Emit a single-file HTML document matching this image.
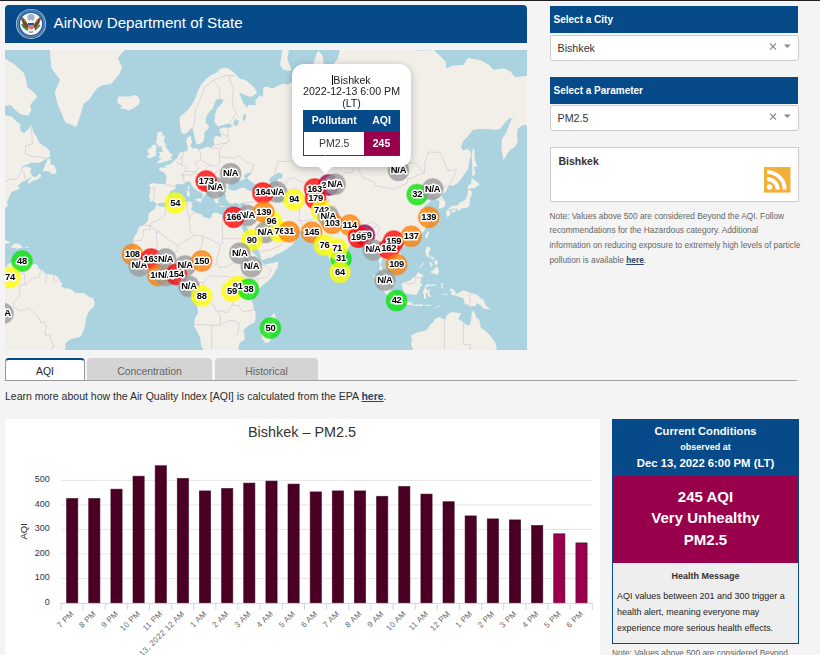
<!DOCTYPE html>
<html><head><meta charset="utf-8">
<style>
*{box-sizing:border-box;margin:0;padding:0}
html,body{width:820px;height:655px;overflow:hidden;background:#f4f4f4;font-family:"Liberation Sans",sans-serif;color:#333}
.abs{position:absolute}
#topline{left:0;top:0;width:820px;height:1px;background:#222}
#hdr{left:5px;top:5px;width:522px;height:38px;background:#064a8a;border-radius:4px 4px 0 0}
#hdr .t{position:absolute;left:48.5px;top:9px;color:#fff;font-size:15.2px;white-space:nowrap}
#map{left:5px;top:50px;width:522px;height:300px;background:#aad3df;overflow:hidden}
.rh{left:550px;width:248px;height:26.5px;background:#064a8a;color:#fff;font-weight:bold;font-size:10px;padding:8px 0 0 3.5px;white-space:nowrap}
.sel{left:550px;width:249px;height:26px;background:#fff;border:1px solid #ccc;border-radius:3px;font-size:10.7px;padding:5.8px 0 0 6.5px;color:#333}
.sel .x{position:absolute;right:22px;top:4px;font-size:14px;color:#888}
.sel .dd{position:absolute;right:7px;top:11px;width:0;height:0;border-left:5px solid transparent;border-right:5px solid transparent;border-top:5px solid #888}
.ml{position:absolute;width:40px;height:12px;text-align:center;font-weight:bold;font-size:9.5px;line-height:12px;color:#111;text-shadow:0 0 1px #fff,1px 0 0 #fff,-1px 0 0 #fff,0 1px 0 #fff,0 -1px 0 #fff}
#pop{position:absolute;left:287px;top:14px;width:119px;height:103px;background:#fff;border-radius:12px;box-shadow:0 2px 8px rgba(0,0,0,0.25)}
#pop .pt{position:absolute;left:0;top:11px;width:119px;text-align:center;font-size:10.65px;line-height:11.4px;color:#222}
#pop table{position:absolute;left:11.3px;top:46.2px;width:96.5px;border-collapse:collapse;border:1px solid #064a8a;font-size:10.5px}
#pop th{background:#064a8a;color:#fff;font-weight:bold;height:21.8px;padding:0 0 3px 0}
#pop td{height:23.3px;padding:0 0 2px 0;text-align:center;color:#333;background:#fff}
#pop .c1{width:60.5px}
#pop td.vu{background:#99004c;color:#fff;font-weight:bold}
#poptip{position:absolute;left:314px;top:108px;width:13px;height:13px;background:#fff;transform:rotate(45deg)}
#cc .h{position:absolute;left:0;top:0;width:185px;height:56px;background:#064a8a;color:#fff;text-align:center;font-weight:bold}
#cc .m{position:absolute;left:0;top:56px;width:185px;height:86.5px;background:#99004c;color:#fff;text-align:center;font-weight:bold;font-size:15px;line-height:21.5px;padding-top:9.7px}
#cc .hm{position:absolute;left:0;top:144px;width:185px;text-align:center;font-weight:bold;font-size:9px;color:#333}
#cc .hb{position:absolute;left:4px;top:168px;width:184px;font-size:8.96px;line-height:16px;color:#222}
#rss{left:764.2px;top:167px;width:26.5px;height:25.7px}
#cbox{left:550px;top:147px;width:249px;height:55px;background:#fff;border:1px solid #ccc}
#note{left:549.5px;top:208.5px;white-space:nowrap;font-size:8.32px;line-height:14.85px;color:#666}
#note b{color:#26466d}
.tab{top:358px;height:23px;background:#d4d4d4;border-radius:4px 4px 0 0;font-size:10.4px;color:#666;text-align:center;padding-top:8px}
#tabline{left:5px;top:380px;width:792px;height:1px;background:#a3a3a3}
#learn{left:5px;top:390px;font-size:10.5px;color:#2b2b2b;white-space:nowrap}
#learn b{color:#26466d}
#chart{left:5px;top:419px;width:595px;height:236px;background:#fff}
#cc{left:612px;top:419px;width:187px;height:224.5px;border:1px solid #064a8a;background:#eee}
</style></head><body>
<div id="topline" class="abs"></div>
<div id="hdr" class="abs"><div class="t">AirNow Department of State</div></div>
<svg class="abs" style="left:11px;top:4px" width="40" height="40" viewBox="0 0 40 40">
<circle cx="20" cy="19.9" r="15" fill="#cfe3d0"/>
<circle cx="20" cy="19.9" r="14.3" fill="#2a5ea6"/>
<circle cx="20" cy="19.9" r="13.2" fill="none" stroke="#8fb0d8" stroke-width="0.6"/>
<circle cx="20" cy="19.9" r="11" fill="#f7f7f2"/>
<circle cx="20" cy="13.5" r="3.6" fill="#9fb4c6"/>
<path d="M9.5 12.5 Q12 13 15 17 L17.5 22 L16 25 Q11.5 21 9.5 12.5Z" fill="#6e4a22"/>
<path d="M30.5 12.5 Q28 13 25 17 L22.5 22 L24 25 Q28.5 21 30.5 12.5Z" fill="#6e4a22"/>
<path d="M11 13.5 Q13 15 14.5 18" stroke="#b08a50" stroke-width="1" fill="none"/>
<path d="M29 13.5 Q27 15 25.5 18" stroke="#b08a50" stroke-width="1" fill="none"/>
<circle cx="20" cy="17.3" r="1.5" fill="#f5f5f5"/>
<path d="M17 19.5 h6 v4.5 q-3 3.2 -6 0z" fill="#e07a70"/>
<rect x="17" y="19" width="6" height="2" fill="#2c4f8f"/>
<path d="M11 20 q2 4 6 6" stroke="#3f7a35" stroke-width="2" fill="none"/>
<path d="M29 21 l-5 5" stroke="#555" stroke-width="1.2"/>
<path d="M18 27.5 q2 1.5 4 0" stroke="#8a8a8a" stroke-width="1.4" fill="none"/>
</svg>
<div id="map" class="abs"><svg width="522" height="300" style="position:absolute;left:0;top:0">
<path fill="#f2efe9" d="M-28.1 172.3L-11.1 167.3L-8.9 166.1L-8.5 164.3L-4.7 161.0L-2.1 159.0L0.7 157.2L2.8 156.4L2.0 152.1L3.4 148.9L3.9 147.0L5.8 144.0L6.0 142.0L10.3 140.6L12.4 139.5L14.6 138.9L14.1 137.8L12.8 136.3L13.3 134.9L16.7 132.2L21.0 130.1L22.9 128.9L25.7 127.4L26.7 126.5L26.3 128.3L23.5 130.4L22.7 131.9L23.9 133.7L27.4 131.0L31.6 129.8L34.8 127.4L36.3 126.2L35.0 123.1L32.7 125.5L30.6 127.1L27.4 126.2L26.1 124.3L25.2 121.2L26.5 118.6L22.4 116.4L18.8 117.0L15.6 121.2L17.8 116.0L21.0 115.0L26.3 112.7L33.8 112.7L38.0 111.1L41.9 108.7L44.9 106.3L44.9 101.3L41.2 97.3L37.0 95.1L33.3 91.3L31.6 86.2L28.4 82.2L26.3 74.6L24.2 78.1L19.2 83.0L15.6 81.0L15.0 73.8L11.3 71.2L7.1 66.7L-1.5 64.8L-6.8 64.8L-6.8 172.3ZM37.4 121.2L40.2 121.2L44.4 121.2L45.5 123.4L48.7 123.7L49.8 124.3L51.7 121.5L50.4 118.3L49.6 115.7L45.5 114.1L45.3 108.3L42.7 109.0L41.0 113.1L38.9 118.0ZM-6.8 0.8L-0.4 8.1L10.3 15.0L18.8 22.9L21.0 29.1L22.0 36.7L30.6 43.9L32.1 47.6L27.4 51.7L25.2 55.3L26.3 60.1L23.1 65.8L17.8 64.8L14.6 63.4L10.3 60.1L6.0 55.3L-2.5 56.3L-6.8 57.7ZM8.1 -61.0L8.1 -43.8L23.1 -21.3L39.1 -15.2L44.4 -6.9L45.5 8.1L46.6 18.4L55.1 29.7L49.8 42.3L50.8 47.6L53.0 55.3L56.2 62.5L58.3 68.0L60.5 72.5L66.9 75.1L70.3 76.8L72.2 75.5L73.9 69.4L76.5 61.6L78.6 53.8L83.9 49.7L92.5 37.8L96.7 35.5L106.4 33.8L114.9 23.5L117.0 17.0L112.8 8.1L119.2 0.8L121.3 -11.0L125.6 -28.7L125.6 -61.0ZM112.1 49.7L113.8 46.6L118.1 46.6L124.5 46.6L129.8 45.0L133.0 46.6L135.2 51.7L133.0 55.3L127.7 58.7L123.4 60.6L119.2 58.7L115.5 58.7L117.0 55.8L112.8 53.3ZM151.8 113.4L156.5 112.4L161.9 111.1L167.0 109.4L165.9 107.3L167.6 104.5L164.6 102.7L164.0 101.0L161.0 97.3L160.6 93.6L158.7 91.7L160.2 85.8L157.2 85.4L157.4 81.8L153.3 81.8L151.8 85.8L152.0 89.8L150.8 90.9L152.0 94.7L153.5 95.1L153.5 96.9L157.0 96.2L156.5 98.8L157.8 100.6L157.6 102.0L154.2 102.0L154.6 104.2L155.0 105.6L152.9 107.3L155.5 108.0L157.4 108.7L155.0 109.4L152.7 111.7ZM150.8 105.9L151.2 102.0L151.0 99.1L152.0 96.9L150.5 95.1L148.0 94.7L145.9 96.2L146.5 97.7L142.7 98.8L142.9 101.7L144.4 104.5L141.8 106.3L143.1 108.3L146.1 108.0L149.1 106.3ZM152.0 154.5L150.5 152.4L148.2 151.3L145.0 151.9L145.2 147.8L143.7 147.0L145.0 142.3L145.2 138.0L144.1 135.1L146.9 133.1L152.3 133.7L160.2 134.0L161.2 130.7L161.4 126.2L159.3 122.7L154.4 120.2L154.2 118.0L157.6 117.3L160.6 118.0L159.9 114.4L161.7 115.4L164.4 114.4L167.4 112.7L169.3 109.7L171.7 108.7L173.6 104.9L174.7 102.4L178.9 101.7L182.1 101.0L182.8 97.7L181.7 94.0L181.3 90.1L182.4 87.8L186.4 85.4L186.0 89.8L187.3 90.9L185.3 95.8L187.5 98.8L190.7 98.1L193.9 99.9L199.2 97.7L203.5 96.6L205.8 98.1L209.3 95.1L208.8 89.0L210.1 86.2L212.3 85.4L216.1 87.4L215.5 83.0L214.0 79.3L218.4 77.6L223.8 78.1L228.1 75.9L224.8 73.8L220.6 74.2L213.1 76.4L209.5 72.5L209.9 64.8L212.0 58.7L217.4 52.8L218.2 49.2L215.2 48.7L211.0 49.7L209.3 54.3L207.8 58.7L204.6 61.6L202.0 64.8L200.5 70.3L200.9 73.4L204.1 75.9L203.1 78.9L199.4 82.2L199.2 88.2L197.9 91.7L194.5 94.0L191.5 94.3L190.7 90.9L189.2 85.8L187.9 79.7L186.4 78.1L184.5 80.1L181.1 83.8L177.9 83.8L176.0 81.4L175.1 76.8L174.7 71.6L174.7 67.1L178.9 63.4L183.2 59.7L186.4 55.3L190.3 48.7L192.8 41.2L195.6 35.5L198.2 32.0L202.4 27.8L206.7 24.8L211.0 22.9L215.2 19.0L219.1 17.7L223.8 18.4L230.2 23.5L234.5 28.5L240.9 30.3L249.4 37.8L252.0 43.3L246.2 47.1L238.3 44.4L234.0 42.3L235.5 46.0L238.3 52.8L241.9 57.7L244.1 54.8L250.5 55.3L250.5 50.2L254.7 45.5L257.9 47.1L258.4 37.2L262.2 36.7L267.5 38.4L277.2 33.8L282.5 34.4L288.9 30.9L293.2 26.0L300.6 29.1L306.6 27.2L308.1 15.0L311.3 4.5L313.4 0.8L317.7 6.0L318.8 17.0L317.7 30.9L322.0 36.7L324.1 32.0L320.9 26.0L321.6 15.0L326.3 16.4L332.7 8.8L334.8 0.1L349.7 -3.0L377.5 -24.0L405.3 -0.7L415.9 0.8L428.7 0.1L435.1 6.0L440.5 11.6L441.5 18.4L446.9 15.7L458.6 15.0L462.9 8.1L475.7 10.2L484.2 15.0L488.5 19.7L499.2 18.4L505.6 21.6L509.9 27.2L520.5 26.0L527.0 24.8L537.6 26.0L548.3 33.8L559.0 47.6L548.3 52.8L541.9 64.8L533.4 71.6L527.0 75.9L518.4 75.1L515.2 76.8L512.6 79.3L512.0 84.2L512.6 91.3L510.3 96.6L505.6 99.5L502.8 103.1L498.6 110.4L496.4 99.5L496.8 89.0L500.3 84.2L505.2 72.9L506.7 68.5L512.0 64.8L506.7 68.0L503.5 68.5L494.9 78.9L489.6 79.7L481.0 78.9L473.6 78.9L467.8 80.1L462.9 86.2L458.6 90.5L455.9 97.3L458.0 100.6L462.5 98.8L465.9 102.0L465.7 105.9L464.0 112.4L463.5 118.3L459.7 123.7L456.9 127.7L453.3 132.5L448.4 135.7L445.4 134.9L443.7 136.3L442.8 137.2L440.9 141.5L437.3 144.3L436.2 145.6L438.3 148.4L440.3 152.4L440.1 156.6L436.2 158.2L433.9 158.5L434.1 154.5L434.5 151.1L431.5 150.0L431.3 147.3L429.4 144.0L424.5 146.5L422.8 147.0L424.0 143.1L423.4 141.2L421.3 142.6L418.5 145.6L415.9 146.2L415.3 148.1L417.9 150.8L419.1 151.6L421.7 149.7L425.5 150.8L424.5 152.4L421.1 154.5L418.5 157.4L420.8 160.3L422.1 163.3L424.3 165.6L424.3 167.6L423.0 169.1L424.5 170.3L423.4 174.0L421.3 176.6L419.3 180.7L417.0 183.0L413.4 185.8L408.0 187.9L406.3 188.4L403.1 189.3L400.1 190.7L399.3 192.7L398.2 190.0L395.6 189.8L392.4 191.1L390.3 193.4L389.9 195.7L391.6 199.1L393.5 201.3L396.3 203.9L397.4 207.9L397.1 212.1L394.6 213.6L391.8 214.7L388.8 217.9L387.7 218.6L387.7 215.1L385.0 214.2L382.8 211.0L379.4 209.7L378.8 207.9L377.5 208.6L375.8 214.7L377.1 217.3L378.4 221.2L380.7 222.5L382.6 224.0L384.8 226.7L384.8 229.7L386.5 233.8L385.0 234.2L380.3 231.0L378.8 228.0L378.1 225.2L377.7 223.1L374.3 219.4L374.1 217.3L374.5 213.4L373.7 208.6L372.8 204.6L372.4 201.3L370.0 200.6L367.7 202.8L365.5 202.6L365.3 198.4L363.8 195.0L361.3 191.6L360.4 190.0L359.4 187.5L357.2 188.8L354.4 189.3L351.9 189.8L349.5 191.6L348.7 193.6L345.5 194.8L343.8 197.3L339.7 200.6L337.6 202.6L335.2 203.9L335.4 208.4L334.6 212.9L333.3 214.9L331.2 217.9L329.5 219.7L327.5 217.9L326.3 214.5L324.8 210.8L323.1 205.7L320.9 202.0L319.6 195.9L319.4 191.6L319.0 190.2L318.4 188.4L314.5 191.6L311.3 188.2L313.9 186.8L310.5 185.8L307.9 184.4L306.4 181.2L301.7 181.4L295.5 181.4L290.0 180.9L286.3 180.0L285.3 176.9L282.3 177.6L280.8 178.3L278.2 177.3L275.4 175.7L273.7 174.9L272.5 172.5L271.0 169.6L268.6 169.1L266.5 169.8L266.3 171.3L267.5 174.2L269.3 176.6L271.0 179.0L271.8 180.7L273.5 179.5L274.2 181.4L274.0 183.5L276.3 183.7L279.5 183.7L282.5 180.7L283.8 179.0L284.4 182.1L286.5 184.4L289.5 185.4L291.7 187.7L290.6 190.2L288.9 192.5L287.4 195.7L284.8 196.6L282.1 198.8L279.7 200.2L275.4 203.1L270.8 204.6L268.0 206.8L264.8 207.7L261.6 208.4L259.2 209.7L256.9 209.7L255.4 205.7L255.0 203.3L253.0 199.7L250.9 195.7L247.5 190.2L246.0 184.7L243.4 180.2L241.7 177.3L239.2 174.5L238.5 171.0L237.2 174.5L237.0 175.4L235.7 174.0L233.6 170.1L233.4 170.8L234.9 174.0L236.4 176.9L238.3 180.9L240.2 184.4L242.6 188.8L243.4 191.4L243.8 195.9L246.2 197.9L247.7 202.6L251.1 205.7L254.3 209.2L256.4 211.4L256.9 212.3L259.0 214.7L262.2 214.0L267.5 212.9L270.8 212.3L273.5 211.6L272.9 214.5L272.5 217.3L269.7 222.5L266.5 227.2L263.3 231.0L257.9 234.9L253.7 239.1L251.3 241.7L249.2 244.7L247.7 247.0L246.8 250.9L248.1 254.1L248.8 258.9L250.5 261.7L250.7 267.6L249.4 272.5L243.8 275.2L241.3 277.6L238.5 280.1L239.4 285.4L239.8 289.6L234.5 293.1L234.0 295.7L233.6 300.8L230.8 303.0L228.1 307.2L221.6 313.0L218.4 314.3L212.0 314.3L206.7 316.3L203.5 314.8L202.9 310.4L200.9 305.4L199.2 300.8L196.5 296.9L195.0 287.2L192.6 282.6L189.2 276.1L189.2 273.4L190.0 268.1L193.0 263.2L192.6 259.3L192.2 255.9L190.3 250.0L190.0 249.4L189.4 247.5L187.7 245.3L184.5 242.3L183.2 238.7L183.9 235.9L184.3 233.2L184.9 230.4L184.1 228.9L182.6 227.4L181.1 227.6L178.9 227.6L176.8 227.8L175.3 225.5L173.4 223.5L170.4 223.3L167.4 223.7L164.0 225.0L160.8 226.3L158.0 226.3L155.5 225.9L151.6 226.3L148.0 227.6L144.1 225.2L140.5 222.7L137.5 221.2L135.8 218.8L135.6 216.6L132.8 214.5L131.8 213.2L128.6 210.8L128.1 208.4L127.3 206.2L126.6 205.3L128.6 202.2L129.6 197.0L128.8 194.3L127.7 191.1L128.6 187.9L130.3 184.9L132.0 182.8L133.0 179.0L136.0 175.4L139.4 174.5L142.2 171.5L143.5 168.6L143.1 166.8L143.9 163.6L145.9 161.5L149.5 159.5L150.8 156.4L151.4 155.1L152.5 154.8L154.4 156.6L159.3 156.9L161.4 155.3L165.1 153.7L170.8 152.4L175.7 152.4L182.4 152.1L184.9 151.1L186.0 151.9L187.7 152.4L186.4 154.0L187.7 156.6L185.8 159.0L187.3 160.5L190.7 162.8L196.7 164.3L197.5 166.3L204.4 168.8L206.9 167.1L206.7 164.3L209.9 162.6L213.1 163.3L217.4 165.3L222.7 166.6L227.4 167.1L231.3 166.1L233.0 166.8L237.0 166.6L237.9 164.6L238.9 162.1L239.8 160.0L240.6 157.9L240.4 154.5L241.1 152.4L239.8 152.9L237.9 152.4L234.5 154.3L232.3 153.2L229.3 152.7L227.4 154.0L223.8 152.7L222.3 150.5L220.4 148.4L221.4 145.1L219.7 143.4L219.9 142.0L217.4 141.2L214.8 141.7L212.3 142.3L212.0 143.1L213.7 145.9L215.2 148.6L213.1 149.5L213.5 153.2L211.8 153.2L210.3 152.4L209.0 149.7L210.1 148.4L208.2 147.0L206.7 144.5L205.4 142.9L205.6 138.6L203.5 136.6L201.6 135.1L198.2 133.7L196.5 131.6L194.5 128.6L193.2 127.1L190.5 128.0L190.3 130.4L193.0 133.7L195.4 137.8L198.4 139.8L201.4 141.5L203.5 143.4L202.2 143.7L199.4 144.8L199.2 147.3L197.5 149.2L197.9 145.4L197.3 143.4L194.1 141.5L190.9 139.8L187.7 136.9L186.4 135.4L185.8 132.5L182.8 131.0L180.0 132.8L178.1 134.6L174.7 134.0L172.5 133.7L170.6 134.9L170.8 138.3L168.5 140.0L165.7 140.9L163.4 145.1L164.4 147.0L162.5 150.3L159.5 152.7L154.6 152.7ZM-0.4 218.8L2.8 214.5L5.6 212.9L8.1 212.3L11.1 210.3L11.8 211.4L14.1 212.1L15.0 210.8L18.2 213.6L22.9 214.2L26.7 214.7L30.6 214.0L32.1 215.1L34.2 218.8L37.0 219.9L39.3 222.5L41.9 224.2L44.7 224.4L48.9 224.8L52.3 226.5L53.8 228.0L55.8 232.3L57.3 233.4L56.4 236.4L58.3 237.4L60.5 238.7L62.6 238.3L67.3 240.0L69.4 242.6L74.3 243.0L79.5 243.2L84.4 247.3L88.2 248.1L89.5 252.4L89.1 256.3L84.8 260.6L82.0 265.0L80.7 269.4L80.1 275.8L78.6 280.4L76.7 284.9L74.3 287.2L68.6 288.2L64.7 289.8L60.5 293.3L60.2 299.5L57.9 302.5L55.1 306.7L53.0 310.4L49.8 314.3L-6.8 314.3L-6.8 219.9ZM5.8 193.0L2.6 193.6L-1.7 193.9L-0.8 192.0L-3.6 190.0L-6.8 188.8L-6.8 186.1L-1.5 189.3L2.4 190.9ZM4.9 197.0L8.6 197.7L12.4 198.8L18.0 197.3L17.8 196.4L15.4 195.2L14.6 194.1L10.9 193.6L7.3 193.9L8.6 195.5L5.2 196.6ZM20.3 197.0L23.9 197.3L23.5 197.9L20.5 197.9ZM406.3 285.2L407.8 284.7L413.2 282.0L417.9 281.3L422.3 279.5L425.1 274.5L427.7 272.7L430.9 268.3L434.9 266.7L437.3 268.9L440.7 269.2L441.8 265.4L443.5 263.7L447.1 261.9L453.3 263.0L456.1 263.5L454.8 265.6L453.3 268.9L457.1 271.6L461.4 274.7L464.6 274.9L466.3 269.4L466.3 265.0L468.2 260.0L470.4 264.1L471.0 267.8L474.2 269.4L475.9 278.1L478.5 279.2L482.1 282.4L486.0 286.5L490.7 293.3L491.7 299.3L491.9 304.2L411.7 316.8L409.1 313.0L408.7 300.8L405.9 294.5L407.0 289.8ZM444.1 240.4L446.9 237.9L452.2 244.0L458.2 240.2L465.0 242.6L472.5 245.1L475.3 248.1L478.9 250.0L479.8 254.1L483.2 257.6L486.0 259.3L483.8 259.3L478.1 258.7L476.1 255.6L471.9 253.3L470.2 256.3L465.0 256.5L462.9 254.6L460.1 254.8L458.2 248.1L453.3 246.6L449.7 245.3L447.7 245.5L445.4 243.0L448.0 241.9ZM396.7 233.8L398.0 232.7L401.4 231.7L405.3 230.2L408.5 227.2L410.6 225.9L413.4 222.2L415.3 223.5L418.5 225.5L416.1 227.8L415.5 233.2L418.1 235.1L414.9 236.8L414.9 238.7L412.7 242.6L411.7 245.1L408.5 244.7L402.7 243.8L399.3 243.4L398.0 239.6L396.7 236.1ZM367.5 225.0L372.2 225.9L378.1 231.7L385.4 238.7L387.1 240.8L390.3 243.8L389.9 249.4L387.3 249.6L382.4 245.5L379.2 241.5L375.4 236.6L373.9 232.1L370.0 229.1ZM388.6 251.5L391.4 249.8L395.2 250.5L400.6 250.7L404.4 251.8L408.2 253.7L408.5 255.6L401.0 254.6L394.6 253.7L391.0 252.8ZM409.5 254.6L411.7 254.6L418.1 254.3L418.1 255.9L411.7 256.1L409.5 255.9ZM419.8 255.0L426.6 254.6L426.6 255.4L419.8 256.1ZM428.7 258.5L434.9 254.8L435.1 255.4L428.7 259.1ZM419.1 248.8L418.9 244.5L417.6 243.0L419.8 237.0L420.6 235.3L422.3 234.2L426.6 235.1L430.9 233.8L429.4 236.1L423.4 235.9L420.6 237.4L422.3 240.2L427.5 238.9L424.0 241.3L424.9 244.5L426.2 247.0L423.4 246.6L422.1 242.8L420.8 243.0L421.1 248.8ZM436.2 232.7L438.3 233.8L437.3 235.9L439.0 238.7L436.9 238.1L436.2 234.9ZM437.3 243.8L443.3 244.5L442.6 245.3L437.7 244.7ZM421.5 196.8L424.9 196.8L425.5 200.2L423.6 202.6L424.5 206.6L428.7 207.3L429.0 209.9L426.6 208.8L424.0 207.0L421.5 206.2L420.4 202.2ZM424.5 222.0L428.1 220.3L429.0 219.0L431.9 216.0L434.1 221.4L432.2 225.0L429.2 223.7ZM429.4 210.1L432.4 210.5L432.8 213.4L430.9 215.5L429.6 213.8ZM424.3 211.6L426.8 212.9L426.4 214.5L424.3 214.5ZM426.6 213.6L427.7 214.5L427.2 217.3L425.3 216.2ZM414.2 219.0L419.6 212.7L418.7 212.3L414.2 217.9ZM443.5 158.7L446.7 156.1L452.9 155.3L455.9 151.3L457.1 152.1L460.3 149.7L462.7 143.7L462.9 140.3L466.1 140.0L467.0 144.3L465.0 148.4L464.8 152.1L464.2 156.6L462.7 157.4L460.3 158.2L456.5 158.2L456.1 159.0L453.9 161.0L452.2 158.5L448.0 158.7L444.8 159.7L443.5 159.7ZM440.9 160.8L443.7 160.0L445.8 162.3L444.3 166.3L442.2 167.3L441.1 163.1ZM446.0 160.3L451.2 159.2L451.6 160.3L448.0 162.8ZM462.9 139.5L465.5 138.6L469.9 138.0L474.6 134.3L472.5 132.2L466.5 128.0L466.1 134.6L464.0 134.6L462.9 137.2ZM467.2 126.2L470.4 124.6L468.9 116.7L472.1 116.7L469.7 108.3L469.3 98.4L467.8 98.8L466.7 104.9L467.4 119.9ZM420.4 186.5L421.9 189.1L424.3 182.1L423.4 181.2L420.6 184.4ZM395.9 195.2L398.8 193.2L401.0 194.3L399.9 196.8L397.8 197.5ZM334.4 216.0L336.7 217.9L338.6 221.4L337.4 223.7L335.0 224.0L334.4 220.3ZM269.3 262.8L271.8 270.5L269.7 274.9L267.5 281.7L264.6 291.9L260.5 293.3L257.3 288.6L256.4 284.7L258.6 280.1L257.9 274.5L262.2 270.9L266.3 266.3ZM275.0 15.0L278.4 19.7L283.6 21.0L286.8 19.7L282.3 9.5L283.6 1.6L292.1 -16.0L307.0 -27.7L292.1 -28.7L277.2 0.8ZM190.5 148.9L192.8 148.6L197.3 148.4L196.2 151.1L196.5 152.7L194.5 151.9L190.7 150.3ZM181.5 141.2L184.3 140.3L184.9 143.4L184.5 146.2L182.1 146.5L181.9 142.9ZM182.4 137.5L183.9 135.1L184.5 136.6L183.6 139.8L182.8 139.2ZM214.2 155.6L220.2 156.4L219.5 157.2L214.4 156.6ZM233.0 157.2L237.9 155.3L236.6 158.2L233.4 157.9Z"/>
<path fill="#aad3df" d="M222.7 136.6L223.8 139.2L226.1 140.3L230.8 140.6L235.5 138.0L239.2 137.8L242.8 140.0L245.8 141.2L249.6 140.9L252.6 139.5L252.8 136.6L249.4 134.0L245.6 131.0L243.6 129.8L242.1 128.3L239.8 128.9L238.3 129.8L235.5 130.7L233.4 128.0L235.7 125.9L231.5 124.3L229.1 126.2L227.4 128.3L225.3 131.3L223.6 135.1ZM238.7 127.7L241.9 128.3L245.8 124.0L247.9 122.4L244.1 122.7L239.8 124.6ZM265.4 135.1L269.7 142.6L268.4 147.8L268.8 150.3L271.4 151.6L274.6 152.7L279.1 152.1L278.9 146.7L277.4 143.7L276.7 139.5L275.4 138.6L277.2 136.6L273.5 134.6L272.5 130.4L273.5 128.6L277.4 128.3L277.4 123.7L273.3 122.7L269.3 124.9L265.6 127.4L263.9 129.8ZM231.9 239.1L233.4 236.4L236.6 236.6L237.7 239.1L235.5 242.3L232.3 242.3ZM228.1 73.4L230.2 68.9L234.0 70.7L233.0 75.1L230.2 75.9ZM237.7 70.3L238.7 63.4L241.5 65.8L239.8 70.7ZM385.6 108.0L388.2 107.0L395.6 101.3L398.4 93.6L397.1 92.8L392.4 100.2L387.1 105.6ZM320.9 127.7L324.1 124.3L332.7 124.6L328.4 125.5L323.1 126.8Z"/>
<path fill="none" stroke="#c6a8c6" stroke-width="0.6" stroke-opacity="0.7" d="M-4.7 134.6L0.9 131.6L4.5 129.2L11.3 129.2L13.1 127.7L14.6 124.0L16.3 121.8L18.4 122.1L19.2 122.7L19.2 127.1L20.7 128.9M42.1 108.7L35.9 107.0L27.4 106.6L20.3 103.5L20.5 95.8L27.4 94.0L26.3 74.6M145.0 138.3L150.1 138.3L149.3 140.9L149.1 144.5L148.4 145.4L149.1 148.6L148.2 151.3M160.2 134.0L165.5 135.7L170.8 136.9M169.3 109.7L173.0 113.4L176.4 115.0L181.5 116.7L180.2 121.2L176.8 125.5L178.9 126.5L178.5 130.7L180.0 132.8M173.6 108.7L176.8 107.3L178.9 102.0M176.4 115.0L177.2 111.7L176.8 107.3M180.2 121.2L184.3 121.5L191.8 121.5L193.5 117.7L189.8 112.4L196.0 110.0L195.2 102.0L194.3 99.9M184.3 96.6L182.4 96.2M176.8 125.5L186.4 124.6L190.0 123.1L193.2 124.6L199.2 124.6L200.3 119.9L204.4 115.0M196.0 110.0L204.4 115.0L212.0 116.4L215.2 111.7L214.2 106.6L214.2 99.5L212.7 98.1L205.8 98.1M209.3 95.1L220.8 93.2L224.2 91.3L222.7 86.2L223.1 78.5M214.2 99.5L220.8 93.2M210.1 86.2L217.4 84.2L222.7 86.2M214.2 106.6L229.1 108.3L232.3 106.3L234.5 105.6L239.6 111.4L249.4 114.7L245.6 122.4M223.8 73.8L228.1 68.0L231.3 63.0L227.0 54.3L228.3 38.4L225.3 31.4L224.2 25.4M215.2 48.7L214.4 37.2L208.0 30.3M187.9 79.7L189.6 71.6L190.3 60.1L195.0 50.2L199.2 37.8L208.0 30.3L219.5 26.0L224.2 25.4L230.2 26.0M199.2 124.6L204.1 126.5L208.8 125.5L212.9 120.2L220.8 118.9L224.2 127.7M212.5 131.6L222.7 132.2L225.1 133.1M204.6 129.5L212.5 131.6M198.2 133.7L204.6 129.5M205.4 138.0L207.8 140.9L208.8 141.2L212.9 140.0L219.5 138.9L219.9 142.0M212.9 140.0L212.0 137.2L212.5 131.6M240.9 152.4L245.1 152.4L254.3 151.3L259.6 151.3L258.4 145.1L256.9 140.6M249.4 134.0L257.9 136.0L263.3 138.3L267.5 138.6M256.9 140.6L260.1 140.3L263.3 138.3M259.6 144.5L266.5 147.8M254.3 151.3L252.0 158.5L246.8 161.3M240.6 157.9L241.9 162.3L246.8 161.3M246.8 161.3L243.0 166.1L247.3 169.8L238.7 171.3M246.8 161.3L259.4 171.8L263.3 172.0L266.5 170.3M259.6 151.3L261.1 157.2L263.3 162.8L266.5 168.8M255.4 201.5L264.3 200.2L275.0 195.7L282.7 188.8L284.6 183.7M274.0 183.5L282.7 188.8M269.7 124.6L272.9 111.7L282.5 111.4L294.2 110.7L295.3 100.2L303.8 97.3L313.4 95.1L320.9 99.5L328.0 98.4L334.8 110.7L342.3 110.0L350.4 116.0M277.2 138.0L283.6 129.2L289.1 127.4L294.2 131.3L301.7 133.4L309.2 140.9L315.6 135.7L323.1 134.6L334.8 135.7L336.5 128.6L340.4 122.4L346.8 122.7L350.4 116.0M279.1 151.1L285.7 148.9L294.2 153.2L294.9 155.6L294.2 166.3L294.0 170.3L299.1 171.0L306.0 170.1L312.0 165.1L315.6 159.7L316.7 153.5L323.7 151.6M294.9 155.6L302.8 151.1L309.2 151.6L316.7 152.4L323.7 151.6M283.6 139.5L292.1 138.0L296.4 143.7L306.0 150.5M295.5 181.4L297.4 174.0L294.0 170.3M309.6 184.9L315.6 183.0L314.5 175.9L323.1 167.3L324.1 163.6L322.6 157.9L330.1 155.9M330.1 155.9L332.7 163.6L338.0 168.8L343.3 173.2L352.1 174.9L360.4 175.2L367.9 171.8L371.7 174.2L370.0 177.1L366.8 179.5L363.6 185.4L361.5 190.0M352.1 174.9L352.9 179.5L354.0 188.8M360.4 175.2L356.1 180.7L361.5 190.0M372.2 174.0L374.7 178.3L372.2 184.2L376.4 188.6L380.1 190.2L381.8 187.7L385.0 187.2L389.2 185.8L391.8 187.0L394.6 190.0M351.5 116.0L358.3 128.3L367.9 131.3L371.1 136.0L388.2 139.2L402.1 133.4L402.7 128.9L407.4 128.0L413.2 124.9L419.6 123.1L415.9 119.9L411.7 114.1L408.0 112.4L396.7 115.7L391.2 112.4L381.8 109.0L373.7 106.3L372.8 113.7L360.4 111.1L351.5 116.0M419.6 123.1L419.8 113.4L423.4 102.0L435.1 102.4L440.5 115.0L443.7 120.9L451.6 119.3L448.0 129.2L443.7 135.4L442.8 137.2M429.4 144.0L434.1 139.5L437.9 138.0L441.5 135.1M434.5 149.5L438.3 148.4M323.7 151.6L322.6 147.6L326.3 142.6L335.2 137.8L336.5 128.6M380.1 190.2L377.9 192.7L379.6 199.1L387.5 199.3L389.2 206.2L382.8 211.0M385.0 187.2L387.1 195.9L393.5 204.6L390.3 209.0L387.7 215.1M372.2 201.3L374.5 197.5L377.7 192.5M374.3 217.7L374.5 213.4L375.8 214.7M160.4 157.2L160.4 164.3L156.3 168.3L145.4 173.5L145.4 176.4L153.8 181.9L164.0 190.0L173.0 195.2M145.4 175.4L135.8 175.4M145.4 176.4L145.4 179.5L138.4 179.5L138.4 185.4L136.2 190.4L127.7 190.4M182.4 152.1L181.7 158.2L184.3 169.3L185.3 181.2L189.6 185.4L173.0 195.2M188.6 161.8L184.3 169.3M217.4 165.8L217.4 188.8L243.0 188.8M217.4 193.4L215.2 194.5L197.1 185.6L189.6 185.4M217.4 188.8L217.4 193.4M138.4 205.7L139.7 203.3L152.5 201.7L151.2 182.1L153.8 181.9M173.0 195.2L173.0 200.6L166.1 204.6L162.9 204.4L152.5 214.7L146.9 215.1L140.5 210.3L138.4 205.7M215.2 194.5L214.2 203.1L211.0 209.7L214.2 217.7L221.6 216.6L232.3 211.2L236.6 216.6M198.2 186.5L197.1 193.4L192.8 206.8L195.0 210.1L197.1 220.9L203.7 219.9L212.0 213.4M171.7 211.9L178.9 209.0L193.0 207.5L195.0 210.1L193.2 214.5L187.5 222.7L182.4 227.2M171.7 211.9L169.8 223.5M166.1 204.6L166.1 213.4L164.0 213.4L163.6 225.0M158.0 226.3L157.6 213.4L152.5 214.7M148.0 227.6L146.9 219.9L140.5 210.3M190.0 249.4L199.2 253.1L206.7 252.0L211.0 260.6L215.2 260.6L222.7 262.8L227.0 255.2L229.1 246.6L227.0 240.2L228.1 234.9L230.2 228.9L222.7 226.3L217.4 226.3L205.6 225.9L201.4 229.5L198.2 232.7L193.9 232.3L188.1 232.3L184.9 232.1M198.2 232.7L198.2 239.1L190.3 247.7M255.8 213.4L266.5 219.9L262.2 227.4L253.5 228.5L251.5 240.6M236.6 227.2L240.9 227.4L246.2 229.3L253.5 228.5M244.5 244.9L236.6 239.1L227.0 240.2M236.6 216.6L237.7 224.2L236.6 227.2M241.9 206.2L246.2 197.9M235.5 228.9L230.2 228.9M189.2 274.3L206.7 275.2L214.0 275.2L223.8 270.7L228.9 270.7L234.0 273.2L233.4 282.9L230.8 286.1M206.7 275.2L206.7 285.2L206.7 300.3M250.5 259.5L238.3 261.9L234.5 257.4L233.6 255.2L227.0 255.2M211.0 260.6L215.2 265.0L215.2 276.1M9.6 211.6L9.2 217.7L10.3 222.0L19.5 223.7L19.9 232.7L21.2 234.4L27.4 228.5L34.2 227.4L35.9 218.8M41.9 224.2L40.2 233.4M48.7 224.8L48.7 232.1M53.8 228.0L51.9 232.3M14.8 246.2L8.1 252.4L9.2 257.4L15.6 260.6L24.2 258.0L32.7 266.1L35.9 272.3L39.7 272.3L41.2 276.1L40.2 280.6L40.4 285.2L45.1 285.8L47.6 293.6L49.1 297.1L44.9 299.3M14.8 246.2L14.6 234.9L21.2 234.4M439.4 269.4L439.4 308.4M458.6 272.3L458.6 294.5L465.0 294.5L465.0 314.3M465.0 301.7L482.1 301.0L491.7 299.8M465.0 242.6L465.0 256.5M409.5 226.5L413.8 227.8L415.9 228.0M398.0 232.7L403.1 233.8L408.5 233.8L410.6 229.5L409.5 226.5"/>
</svg><svg width="522" height="300" style="position:absolute;left:0;top:0;will-change:transform"><circle cx="225.6" cy="123.8" r="10.2" fill="#999999" fill-opacity="0.76" stroke="#999999" stroke-opacity="0.5" stroke-width="1.6"/><circle cx="210.4" cy="137.8" r="10.2" fill="#999999" fill-opacity="0.76" stroke="#999999" stroke-opacity="0.5" stroke-width="1.6"/><circle cx="201.2" cy="131.1" r="10.2" fill="#ff0000" fill-opacity="0.76" stroke="#ff0000" stroke-opacity="0.5" stroke-width="1.6"/><circle cx="170.2" cy="153.0" r="10.2" fill="#ffff00" fill-opacity="0.76" stroke="#ffff00" stroke-opacity="0.5" stroke-width="1.6"/><circle cx="271.6" cy="142.0" r="10.2" fill="#999999" fill-opacity="0.76" stroke="#999999" stroke-opacity="0.5" stroke-width="1.6"/><circle cx="257.9" cy="142.9" r="10.2" fill="#ff0000" fill-opacity="0.76" stroke="#ff0000" stroke-opacity="0.5" stroke-width="1.6"/><circle cx="289.1" cy="149.8" r="10.2" fill="#ffff00" fill-opacity="0.76" stroke="#ffff00" stroke-opacity="0.5" stroke-width="1.6"/><circle cx="242.3" cy="165.4" r="10.2" fill="#999999" fill-opacity="0.76" stroke="#999999" stroke-opacity="0.5" stroke-width="1.6"/><circle cx="228.7" cy="167.3" r="10.2" fill="#ff0000" fill-opacity="0.76" stroke="#ff0000" stroke-opacity="0.5" stroke-width="1.6"/><circle cx="266.4" cy="171.1" r="10.2" fill="#ffff00" fill-opacity="0.76" stroke="#ffff00" stroke-opacity="0.5" stroke-width="1.6"/><circle cx="258.7" cy="162.0" r="10.2" fill="#ff7e00" fill-opacity="0.76" stroke="#ff7e00" stroke-opacity="0.5" stroke-width="1.6"/><circle cx="260.3" cy="182.5" r="10.2" fill="#999999" fill-opacity="0.76" stroke="#999999" stroke-opacity="0.5" stroke-width="1.6"/><circle cx="274.4" cy="181.8" r="10.2" fill="#ffff00" fill-opacity="0.76" stroke="#ffff00" stroke-opacity="0.5" stroke-width="1.6"/><circle cx="284.0" cy="181.8" r="10.2" fill="#ff7e00" fill-opacity="0.76" stroke="#ff7e00" stroke-opacity="0.5" stroke-width="1.6"/><circle cx="246.8" cy="190.0" r="10.2" fill="#ffff00" fill-opacity="0.76" stroke="#ffff00" stroke-opacity="0.5" stroke-width="1.6"/><circle cx="234.8" cy="203.2" r="10.2" fill="#999999" fill-opacity="0.76" stroke="#999999" stroke-opacity="0.5" stroke-width="1.6"/><circle cx="246.5" cy="216.8" r="10.2" fill="#999999" fill-opacity="0.76" stroke="#999999" stroke-opacity="0.5" stroke-width="1.6"/><circle cx="232.8" cy="236.4" r="10.2" fill="#ffff00" fill-opacity="0.76" stroke="#ffff00" stroke-opacity="0.5" stroke-width="1.6"/><circle cx="227.0" cy="241.2" r="10.2" fill="#ffff00" fill-opacity="0.76" stroke="#ffff00" stroke-opacity="0.5" stroke-width="1.6"/><circle cx="243.5" cy="239.3" r="10.2" fill="#00e400" fill-opacity="0.76" stroke="#00e400" stroke-opacity="0.5" stroke-width="1.6"/><circle cx="265.5" cy="278.1" r="10.2" fill="#00e400" fill-opacity="0.76" stroke="#00e400" stroke-opacity="0.5" stroke-width="1.6"/><circle cx="127.4" cy="204.5" r="10.2" fill="#ff7e00" fill-opacity="0.76" stroke="#ff7e00" stroke-opacity="0.5" stroke-width="1.6"/><circle cx="134.3" cy="215.9" r="10.2" fill="#999999" fill-opacity="0.76" stroke="#999999" stroke-opacity="0.5" stroke-width="1.6"/><circle cx="146.0" cy="209.0" r="10.2" fill="#ff0000" fill-opacity="0.76" stroke="#ff0000" stroke-opacity="0.5" stroke-width="1.6"/><circle cx="160.6" cy="209.0" r="10.2" fill="#999999" fill-opacity="0.76" stroke="#999999" stroke-opacity="0.5" stroke-width="1.6"/><circle cx="180.1" cy="215.9" r="10.2" fill="#999999" fill-opacity="0.76" stroke="#999999" stroke-opacity="0.5" stroke-width="1.6"/><circle cx="196.7" cy="211.0" r="10.2" fill="#ff7e00" fill-opacity="0.76" stroke="#ff7e00" stroke-opacity="0.5" stroke-width="1.6"/><circle cx="152.8" cy="225.5" r="10.2" fill="#ff7e00" fill-opacity="0.76" stroke="#ff7e00" stroke-opacity="0.5" stroke-width="1.6"/><circle cx="160.6" cy="225.5" r="10.2" fill="#999999" fill-opacity="0.76" stroke="#999999" stroke-opacity="0.5" stroke-width="1.6"/><circle cx="171.3" cy="224.5" r="10.2" fill="#ff0000" fill-opacity="0.76" stroke="#ff0000" stroke-opacity="0.5" stroke-width="1.6"/><circle cx="184.0" cy="236.4" r="10.2" fill="#999999" fill-opacity="0.76" stroke="#999999" stroke-opacity="0.5" stroke-width="1.6"/><circle cx="196.7" cy="246.1" r="10.2" fill="#ffff00" fill-opacity="0.76" stroke="#ffff00" stroke-opacity="0.5" stroke-width="1.6"/><circle cx="17.0" cy="211.1" r="10.2" fill="#00e400" fill-opacity="0.76" stroke="#00e400" stroke-opacity="0.5" stroke-width="1.6"/><circle cx="5.0" cy="227.5" r="10.2" fill="#ffff00" fill-opacity="0.76" stroke="#ffff00" stroke-opacity="0.5" stroke-width="1.6"/><circle cx="-2.0" cy="263.5" r="10.2" fill="#999999" fill-opacity="0.76" stroke="#999999" stroke-opacity="0.5" stroke-width="1.6"/><circle cx="323.7" cy="135.0" r="10.2" fill="#99004c" fill-opacity="0.76" stroke="#99004c" stroke-opacity="0.5" stroke-width="1.6"/><circle cx="330.1" cy="134.2" r="10.2" fill="#999999" fill-opacity="0.76" stroke="#999999" stroke-opacity="0.5" stroke-width="1.6"/><circle cx="309.6" cy="139.0" r="10.2" fill="#ff0000" fill-opacity="0.76" stroke="#ff0000" stroke-opacity="0.5" stroke-width="1.6"/><circle cx="310.6" cy="148.8" r="10.2" fill="#ff0000" fill-opacity="0.76" stroke="#ff0000" stroke-opacity="0.5" stroke-width="1.6"/><circle cx="316.5" cy="160.5" r="10.2" fill="#ffff00" fill-opacity="0.76" stroke="#ffff00" stroke-opacity="0.5" stroke-width="1.6"/><circle cx="323.3" cy="166.4" r="10.2" fill="#999999" fill-opacity="0.76" stroke="#999999" stroke-opacity="0.5" stroke-width="1.6"/><circle cx="327.2" cy="173.2" r="10.2" fill="#ff7e00" fill-opacity="0.76" stroke="#ff7e00" stroke-opacity="0.5" stroke-width="1.6"/><circle cx="344.8" cy="175.1" r="10.2" fill="#ff7e00" fill-opacity="0.76" stroke="#ff7e00" stroke-opacity="0.5" stroke-width="1.6"/><circle cx="306.7" cy="182.3" r="10.2" fill="#ff7e00" fill-opacity="0.76" stroke="#ff7e00" stroke-opacity="0.5" stroke-width="1.6"/><circle cx="359.4" cy="185.3" r="10.2" fill="#99004c" fill-opacity="0.76" stroke="#99004c" stroke-opacity="0.5" stroke-width="1.6"/><circle cx="353.5" cy="187.2" r="10.2" fill="#ff0000" fill-opacity="0.76" stroke="#ff0000" stroke-opacity="0.5" stroke-width="1.6"/><circle cx="319.4" cy="195.0" r="10.2" fill="#ffff00" fill-opacity="0.76" stroke="#ffff00" stroke-opacity="0.5" stroke-width="1.6"/><circle cx="336.0" cy="208.7" r="10.2" fill="#00e400" fill-opacity="0.76" stroke="#00e400" stroke-opacity="0.5" stroke-width="1.6"/><circle cx="332.1" cy="198.9" r="10.2" fill="#ffff00" fill-opacity="0.76" stroke="#ffff00" stroke-opacity="0.5" stroke-width="1.6"/><circle cx="335.0" cy="222.3" r="10.2" fill="#ffff00" fill-opacity="0.76" stroke="#ffff00" stroke-opacity="0.5" stroke-width="1.6"/><circle cx="368.2" cy="199.9" r="10.2" fill="#999999" fill-opacity="0.76" stroke="#999999" stroke-opacity="0.5" stroke-width="1.6"/><circle cx="388.7" cy="191.1" r="10.2" fill="#ff0000" fill-opacity="0.76" stroke="#ff0000" stroke-opacity="0.5" stroke-width="1.6"/><circle cx="383.8" cy="198.9" r="10.2" fill="#ff0000" fill-opacity="0.76" stroke="#ff0000" stroke-opacity="0.5" stroke-width="1.6"/><circle cx="406.2" cy="186.2" r="10.2" fill="#ff7e00" fill-opacity="0.76" stroke="#ff7e00" stroke-opacity="0.5" stroke-width="1.6"/><circle cx="391.6" cy="214.5" r="10.2" fill="#ff7e00" fill-opacity="0.76" stroke="#ff7e00" stroke-opacity="0.5" stroke-width="1.6"/><circle cx="379.9" cy="230.1" r="10.2" fill="#999999" fill-opacity="0.76" stroke="#999999" stroke-opacity="0.5" stroke-width="1.6"/><circle cx="391.6" cy="250.6" r="10.2" fill="#00e400" fill-opacity="0.76" stroke="#00e400" stroke-opacity="0.5" stroke-width="1.6"/><circle cx="393.5" cy="120.5" r="10.2" fill="#999999" fill-opacity="0.76" stroke="#999999" stroke-opacity="0.5" stroke-width="1.6"/><circle cx="412.2" cy="144.6" r="10.2" fill="#00e400" fill-opacity="0.76" stroke="#00e400" stroke-opacity="0.5" stroke-width="1.6"/><circle cx="427.7" cy="139.0" r="10.2" fill="#999999" fill-opacity="0.76" stroke="#999999" stroke-opacity="0.5" stroke-width="1.6"/><circle cx="423.8" cy="167.3" r="10.2" fill="#ff7e00" fill-opacity="0.76" stroke="#ff7e00" stroke-opacity="0.5" stroke-width="1.6"/><g font-family="Liberation Sans, sans-serif" font-weight="bold" font-size="9.4" letter-spacing="-0.25" text-anchor="middle" fill="#000" stroke="#fff" stroke-width="3" stroke-linejoin="round" paint-order="stroke"><text x="225.6" y="126.3">N/A</text><text x="210.4" y="140.3">N/A</text><text x="201.2" y="133.6">173</text><text x="170.2" y="155.5">54</text><text x="271.6" y="144.5">N/A</text><text x="257.9" y="145.4">164</text><text x="289.1" y="152.3">94</text><text x="242.3" y="167.9">N/A</text><text x="228.7" y="169.8">166</text><text x="266.4" y="173.6">96</text><text x="258.7" y="164.5">139</text><text x="260.3" y="185.0">N/A</text><text x="274.4" y="184.3">76</text><text x="284.0" y="184.3">31</text><text x="246.8" y="192.5">90</text><text x="234.8" y="205.7">N/A</text><text x="246.5" y="219.3">N/A</text><text x="232.8" y="238.9">91</text><text x="227.0" y="243.7">59</text><text x="243.5" y="241.8">38</text><text x="265.5" y="280.6">50</text><text x="127.4" y="207.0">108</text><text x="134.3" y="218.4">N/A</text><text x="146.0" y="211.5">163</text><text x="160.6" y="211.5">N/A</text><text x="180.1" y="218.4">N/A</text><text x="196.7" y="213.5">150</text><text x="152.8" y="228.0">108</text><text x="160.6" y="228.0">N/A</text><text x="171.3" y="227.0">154</text><text x="184.0" y="238.9">N/A</text><text x="196.7" y="248.6">88</text><text x="17.0" y="213.6">48</text><text x="5.0" y="230.0">74</text><text x="-2.0" y="266.0">N/A</text><text x="323.7" y="137.5">245</text><text x="330.1" y="136.7">N/A</text><text x="309.6" y="141.5">163</text><text x="310.6" y="151.3">179</text><text x="316.5" y="163.0">742</text><text x="323.3" y="168.9">N/A</text><text x="327.2" y="175.7">103</text><text x="344.8" y="177.6">114</text><text x="306.7" y="184.8">145</text><text x="359.4" y="187.8">159</text><text x="353.5" y="189.7">195</text><text x="319.4" y="197.5">76</text><text x="336.0" y="211.2">31</text><text x="332.1" y="201.4">71</text><text x="335.0" y="224.8">64</text><text x="368.2" y="202.4">N/A</text><text x="388.7" y="193.6">159</text><text x="383.8" y="201.4">162</text><text x="406.2" y="188.7">137</text><text x="391.6" y="217.0">109</text><text x="379.9" y="232.6">N/A</text><text x="391.6" y="253.1">42</text><text x="393.5" y="123.0">N/A</text><text x="412.2" y="147.1">32</text><text x="427.7" y="141.5">N/A</text><text x="423.8" y="169.8">139</text></g></svg><div id="pop"><div class="pt"><span style="display:inline-block;width:1px;height:10px;background:#000;vertical-align:-1px"></span>Bishkek<br>2022-12-13 6:00 PM<br>(LT)</div>
<table><tr><th class="c1">Pollutant</th><th class="c2">AQI</th></tr><tr><td class="c1">PM2.5</td><td class="c2 vu">245</td></tr></table></div><div id="poptip"></div></div>

<div class="abs rh" style="top:6px">Select a City</div>
<div class="abs sel" style="top:35px">Bishkek<svg style="position:absolute;left:0;top:0" width="249" height="26"><path d="M219.1 7.5L225 13.6M225 7.5L219.1 13.6" stroke="#888" stroke-width="1.1"/><path d="M232.9 8.6H239.7L236.3 12Z" fill="#888"/></svg></div>
<div class="abs rh" style="top:77px">Select a Parameter</div>
<div class="abs sel" style="top:105px">PM2.5<svg style="position:absolute;left:0;top:0" width="249" height="26"><path d="M219.1 7.5L225 13.6M225 7.5L219.1 13.6" stroke="#888" stroke-width="1.1"/><path d="M232.9 8.6H239.7L236.3 12Z" fill="#888"/></svg></div>
<div id="cbox" class="abs"><div style="position:absolute;left:7.5px;top:7px;font-weight:bold;font-size:10.5px;color:#333">Bishkek</div></div>
<svg id="rss" class="abs" viewBox="0 0 27 26"><rect width="27" height="26" fill="#f2b038"/><circle cx="5.6" cy="20.2" r="2.8" fill="#fff"/><path d="M3.3 12.1A10.7 10.7 0 0 1 14 22.8" stroke="#fff" stroke-width="4" fill="none"/><path d="M3.3 5.05A17.75 17.75 0 0 1 21.05 22.8" stroke="#fff" stroke-width="3.9" fill="none"/></svg>
<div id="note" class="abs">Note: Values above 500 are considered Beyond the AQI. Follow<br>recommendations for the Hazardous category. Additional<br>information on reducing exposure to extremely high levels of particle<br>pollution is available <b><u>here</u></b>.</div>

<div class="abs tab" style="left:87px;width:125px">Concentration</div>
<div class="abs tab" style="left:215px;width:103px">Historical</div>
<div id="tabline" class="abs"></div>
<div class="abs tab" style="left:5px;width:80px;background:#fff;border:1px solid #999;border-top:2px solid #064a8a;color:#222;height:23px;padding-top:6px">AQI</div>
<div id="learn" class="abs">Learn more about how the Air Quality Index [AQI] is calculated from the EPA <b><u>here</u></b>.</div>

<div id="chart" class="abs"><svg width="595" height="237" style="position:absolute;left:0;top:0" font-family="Liberation Sans, sans-serif"><rect x="55.9" y="158.9" width="531.4" height="1" fill="#e6e6e6"/><rect x="55.9" y="134.4" width="531.4" height="1" fill="#e6e6e6"/><rect x="55.9" y="109.9" width="531.4" height="1" fill="#e6e6e6"/><rect x="55.9" y="85.4" width="531.4" height="1" fill="#e6e6e6"/><rect x="55.9" y="60.9" width="531.4" height="1" fill="#e6e6e6"/><text x="44.8" y="185.7" text-anchor="end" font-size="9" fill="#333">0</text><text x="44.8" y="161.2" text-anchor="end" font-size="9" fill="#333">100</text><text x="44.8" y="136.7" text-anchor="end" font-size="9" fill="#333">200</text><text x="44.8" y="112.2" text-anchor="end" font-size="9" fill="#333">300</text><text x="44.8" y="87.7" text-anchor="end" font-size="9" fill="#333">400</text><text x="44.8" y="63.2" text-anchor="end" font-size="9" fill="#333">500</text><text transform="translate(22.3,112.3) rotate(-90)" text-anchor="middle" font-size="9.5" fill="#222">AQI</text><rect x="61.6" y="79.5" width="11.2" height="104.9" fill="#4b0023" stroke="#33001a" stroke-width="0.8" stroke-opacity="0.7"/><rect x="83.7" y="79.5" width="11.2" height="104.9" fill="#4b0023" stroke="#33001a" stroke-width="0.8" stroke-opacity="0.7"/><rect x="105.9" y="70.2" width="11.2" height="114.2" fill="#4b0023" stroke="#33001a" stroke-width="0.8" stroke-opacity="0.7"/><rect x="128.0" y="57.2" width="11.2" height="127.2" fill="#4b0023" stroke="#33001a" stroke-width="0.8" stroke-opacity="0.7"/><rect x="150.2" y="46.7" width="11.2" height="137.7" fill="#4b0023" stroke="#33001a" stroke-width="0.8" stroke-opacity="0.7"/><rect x="172.3" y="59.4" width="11.2" height="125.0" fill="#4b0023" stroke="#33001a" stroke-width="0.8" stroke-opacity="0.7"/><rect x="194.4" y="71.9" width="11.2" height="112.5" fill="#4b0023" stroke="#33001a" stroke-width="0.8" stroke-opacity="0.7"/><rect x="216.6" y="69.5" width="11.2" height="114.9" fill="#4b0023" stroke="#33001a" stroke-width="0.8" stroke-opacity="0.7"/><rect x="238.7" y="64.1" width="11.2" height="120.3" fill="#4b0023" stroke="#33001a" stroke-width="0.8" stroke-opacity="0.7"/><rect x="260.9" y="62.1" width="11.2" height="122.3" fill="#4b0023" stroke="#33001a" stroke-width="0.8" stroke-opacity="0.7"/><rect x="283.0" y="65.1" width="11.2" height="119.3" fill="#4b0023" stroke="#33001a" stroke-width="0.8" stroke-opacity="0.7"/><rect x="305.2" y="72.9" width="11.2" height="111.5" fill="#4b0023" stroke="#33001a" stroke-width="0.8" stroke-opacity="0.7"/><rect x="327.3" y="71.9" width="11.2" height="112.5" fill="#4b0023" stroke="#33001a" stroke-width="0.8" stroke-opacity="0.7"/><rect x="349.4" y="71.9" width="11.2" height="112.5" fill="#4b0023" stroke="#33001a" stroke-width="0.8" stroke-opacity="0.7"/><rect x="371.6" y="77.3" width="11.2" height="107.1" fill="#4b0023" stroke="#33001a" stroke-width="0.8" stroke-opacity="0.7"/><rect x="393.7" y="67.5" width="11.2" height="116.9" fill="#4b0023" stroke="#33001a" stroke-width="0.8" stroke-opacity="0.7"/><rect x="415.9" y="75.1" width="11.2" height="109.3" fill="#4b0023" stroke="#33001a" stroke-width="0.8" stroke-opacity="0.7"/><rect x="438.0" y="82.7" width="11.2" height="101.7" fill="#4b0023" stroke="#33001a" stroke-width="0.8" stroke-opacity="0.7"/><rect x="460.1" y="96.9" width="11.2" height="87.5" fill="#4b0023" stroke="#33001a" stroke-width="0.8" stroke-opacity="0.7"/><rect x="482.3" y="99.9" width="11.2" height="84.5" fill="#4b0023" stroke="#33001a" stroke-width="0.8" stroke-opacity="0.7"/><rect x="504.4" y="100.9" width="11.2" height="83.5" fill="#4b0023" stroke="#33001a" stroke-width="0.8" stroke-opacity="0.7"/><rect x="526.6" y="106.5" width="11.2" height="77.9" fill="#4b0023" stroke="#33001a" stroke-width="0.8" stroke-opacity="0.7"/><rect x="548.7" y="114.8" width="11.2" height="69.6" fill="#99004c" stroke="#33001a" stroke-width="0.8" stroke-opacity="0.7"/><rect x="570.9" y="123.9" width="11.2" height="60.5" fill="#99004c" stroke="#33001a" stroke-width="0.8" stroke-opacity="0.7"/><rect x="55.4" y="183.9" width="532.4" height="1" fill="#ccd6eb"/><rect x="55.4" y="183.9" width="1" height="7" fill="#ccd6eb"/><rect x="77.5" y="183.9" width="1" height="7" fill="#ccd6eb"/><rect x="99.7" y="183.9" width="1" height="7" fill="#ccd6eb"/><rect x="121.8" y="183.9" width="1" height="7" fill="#ccd6eb"/><rect x="144.0" y="183.9" width="1" height="7" fill="#ccd6eb"/><rect x="166.1" y="183.9" width="1" height="7" fill="#ccd6eb"/><rect x="188.2" y="183.9" width="1" height="7" fill="#ccd6eb"/><rect x="210.4" y="183.9" width="1" height="7" fill="#ccd6eb"/><rect x="232.5" y="183.9" width="1" height="7" fill="#ccd6eb"/><rect x="254.7" y="183.9" width="1" height="7" fill="#ccd6eb"/><rect x="276.8" y="183.9" width="1" height="7" fill="#ccd6eb"/><rect x="299.0" y="183.9" width="1" height="7" fill="#ccd6eb"/><rect x="321.1" y="183.9" width="1" height="7" fill="#ccd6eb"/><rect x="343.2" y="183.9" width="1" height="7" fill="#ccd6eb"/><rect x="365.4" y="183.9" width="1" height="7" fill="#ccd6eb"/><rect x="387.5" y="183.9" width="1" height="7" fill="#ccd6eb"/><rect x="409.7" y="183.9" width="1" height="7" fill="#ccd6eb"/><rect x="431.8" y="183.9" width="1" height="7" fill="#ccd6eb"/><rect x="453.9" y="183.9" width="1" height="7" fill="#ccd6eb"/><rect x="476.1" y="183.9" width="1" height="7" fill="#ccd6eb"/><rect x="498.2" y="183.9" width="1" height="7" fill="#ccd6eb"/><rect x="520.4" y="183.9" width="1" height="7" fill="#ccd6eb"/><rect x="542.5" y="183.9" width="1" height="7" fill="#ccd6eb"/><rect x="564.7" y="183.9" width="1" height="7" fill="#ccd6eb"/><rect x="586.8" y="183.9" width="1" height="7" fill="#ccd6eb"/><text transform="translate(69.3,195.2) rotate(-45)" text-anchor="end" font-size="8" letter-spacing="0.3" fill="#6a6a6a">7 PM</text><text transform="translate(91.4,195.2) rotate(-45)" text-anchor="end" font-size="8" letter-spacing="0.3" fill="#6a6a6a">8 PM</text><text transform="translate(113.6,195.2) rotate(-45)" text-anchor="end" font-size="8" letter-spacing="0.3" fill="#6a6a6a">9 PM</text><text transform="translate(135.7,195.2) rotate(-45)" text-anchor="end" font-size="8" letter-spacing="0.3" fill="#6a6a6a">10 PM</text><text transform="translate(157.9,195.2) rotate(-45)" text-anchor="end" font-size="8" letter-spacing="0.3" fill="#6a6a6a">11 PM</text><text transform="translate(180.0,195.2) rotate(-45)" text-anchor="end" font-size="8" letter-spacing="0.3" fill="#6a6a6a">Dec 13, 2022 12 AM</text><text transform="translate(202.2,195.2) rotate(-45)" text-anchor="end" font-size="8" letter-spacing="0.3" fill="#6a6a6a">1 AM</text><text transform="translate(224.3,195.2) rotate(-45)" text-anchor="end" font-size="8" letter-spacing="0.3" fill="#6a6a6a">2 AM</text><text transform="translate(246.4,195.2) rotate(-45)" text-anchor="end" font-size="8" letter-spacing="0.3" fill="#6a6a6a">3 AM</text><text transform="translate(268.6,195.2) rotate(-45)" text-anchor="end" font-size="8" letter-spacing="0.3" fill="#6a6a6a">4 AM</text><text transform="translate(290.7,195.2) rotate(-45)" text-anchor="end" font-size="8" letter-spacing="0.3" fill="#6a6a6a">5 AM</text><text transform="translate(312.9,195.2) rotate(-45)" text-anchor="end" font-size="8" letter-spacing="0.3" fill="#6a6a6a">6 AM</text><text transform="translate(335.0,195.2) rotate(-45)" text-anchor="end" font-size="8" letter-spacing="0.3" fill="#6a6a6a">7 AM</text><text transform="translate(357.1,195.2) rotate(-45)" text-anchor="end" font-size="8" letter-spacing="0.3" fill="#6a6a6a">8 AM</text><text transform="translate(379.3,195.2) rotate(-45)" text-anchor="end" font-size="8" letter-spacing="0.3" fill="#6a6a6a">9 AM</text><text transform="translate(401.4,195.2) rotate(-45)" text-anchor="end" font-size="8" letter-spacing="0.3" fill="#6a6a6a">10 AM</text><text transform="translate(423.6,195.2) rotate(-45)" text-anchor="end" font-size="8" letter-spacing="0.3" fill="#6a6a6a">11 AM</text><text transform="translate(445.7,195.2) rotate(-45)" text-anchor="end" font-size="8" letter-spacing="0.3" fill="#6a6a6a">12 PM</text><text transform="translate(467.8,195.2) rotate(-45)" text-anchor="end" font-size="8" letter-spacing="0.3" fill="#6a6a6a">1 PM</text><text transform="translate(490.0,195.2) rotate(-45)" text-anchor="end" font-size="8" letter-spacing="0.3" fill="#6a6a6a">2 PM</text><text transform="translate(512.1,195.2) rotate(-45)" text-anchor="end" font-size="8" letter-spacing="0.3" fill="#6a6a6a">3 PM</text><text transform="translate(534.3,195.2) rotate(-45)" text-anchor="end" font-size="8" letter-spacing="0.3" fill="#6a6a6a">4 PM</text><text transform="translate(556.4,195.2) rotate(-45)" text-anchor="end" font-size="8" letter-spacing="0.3" fill="#6a6a6a">5 PM</text><text transform="translate(578.6,195.2) rotate(-45)" text-anchor="end" font-size="8" letter-spacing="0.3" fill="#6a6a6a">6 PM</text><text x="297" y="17.600000000000023" text-anchor="middle" font-size="14.4" fill="#333">Bishkek – PM2.5</text></svg></div>
<div id="cc" class="abs"><div class="h"><div style="position:absolute;top:5px;width:185px;font-size:11.2px">Current Conditions</div><div style="position:absolute;top:22px;width:185px;font-size:9px">observed at</div><div style="position:absolute;top:37px;width:185px;font-size:11.3px">Dec 13, 2022 6:00 PM (LT)</div></div>
<div class="m">245 AQI<br>Very Unhealthy<br>PM2.5</div>
<div class="hm" style="top:151px">Health Message</div>
<div class="hb">AQI values between 201 and 300 trigger a health alert, meaning everyone may experience more serious health effects.</div></div>
<div class="abs" style="left:612px;top:647.5px;font-size:8.32px;color:#666;white-space:nowrap">Note: Values above 500 are considered Beyond</div>
</body></html>
